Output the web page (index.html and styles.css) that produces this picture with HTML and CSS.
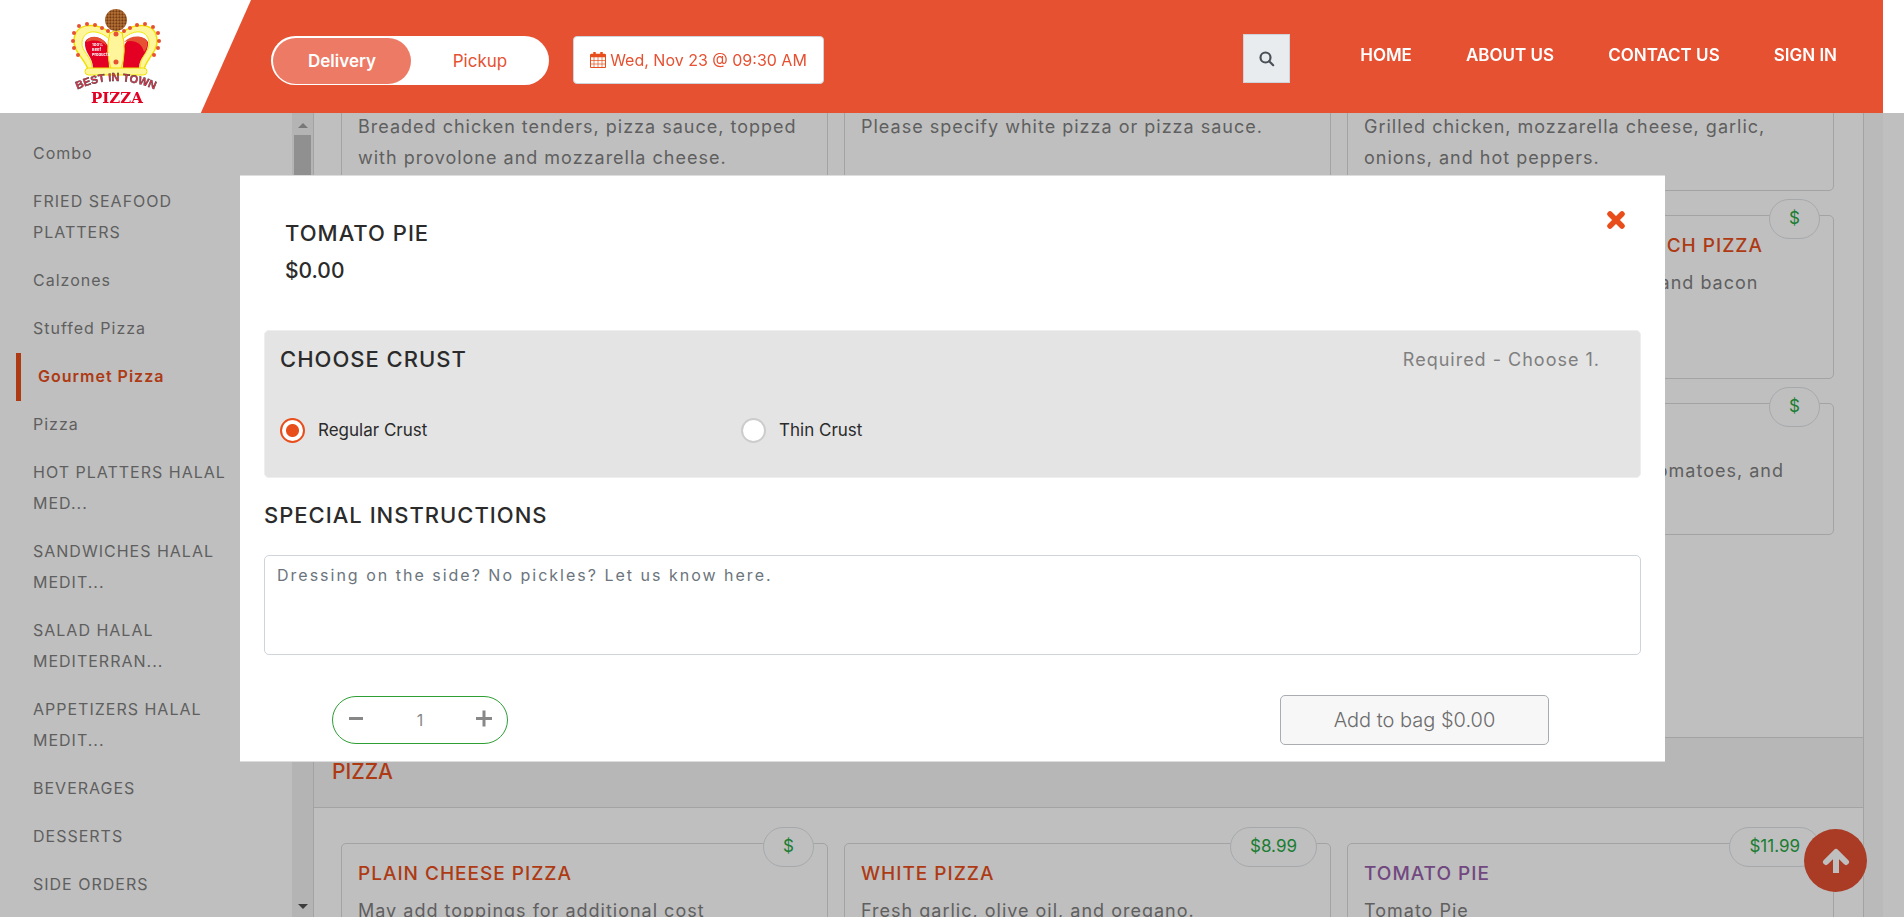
FILE: index.html
```html
<!DOCTYPE html>
<html lang="en">
<head>
<meta charset="utf-8">
<title>Best in Town Pizza</title>
<link rel="stylesheet" href="styles.css">
</head>
<body>
<header class="topbar">
  <div class="brand">
    <a class="logo" href="#" aria-label="Best in Town Pizza">
      <svg width="100" height="106" viewBox="0 0 100 106">
        <defs>
          <path id="arch" d="M8 91 Q49 71 92 91"/>
          <pattern id="meat" width="3" height="3" patternUnits="userSpaceOnUse"><rect width="3" height="3" fill="#9a5a24"/><circle cx="1" cy="1" r=".7" fill="#c98a4a"/><circle cx="2.300" cy="2.300" r=".7" fill="#6c3414"/></pattern>
        </defs>
        <path d="M22 70 C20 60 7 52 8 40 C9 22 32 22 44 33 L56 33 C68 22 90 22 91 40 C92 52 79 60 78 70 Z" fill="#fff59a" stroke="#f0e000" stroke-width="1.500"/>
        <path d="M26 68 C26 56 15 52 16 42 C18 28 34 30 43 39 L44 68 Z" fill="#fff" stroke="#f0e800"/>
        <path d="M74 68 C74 56 84 52 83 42 C81 28 66 30 57 39 L56 68 Z" fill="#fff" stroke="#f0e800"/>
        <path d="M27 68 C27 57 18 53 19 42 C23 34 37 36 42 46 L43 68 Z" fill="#e30022"/>
        <path d="M73 68 C73 57 83 53 82 42 C77 34 62 36 58 46 L57 68 Z" fill="#e30022"/>
        <path d="M20 42 C24 33 37 36 41 46 C34 39 26 40 20 42Z" fill="#e65132"/>
        <path d="M58 42 C66 34 78 36 81 41 C82 46 80 50 78 52 C76 43 68 39 58 42Z" fill="#e65132"/>
        <path d="M44 33 Q50 29 56 33 Q61 50 55 69 L45 69 Q39 50 44 33Z" fill="#fff59a" stroke="#f0d800"/>
        <rect x="19" y="68" width="62" height="7" rx="3.500" fill="#fff59a" stroke="#f0e000"/>
        <circle cx="50" cy="20" r="11" fill="url(#meat)"/>
        <g fill="#e65132"><circle cx="13" cy="26" r="2"/><circle cx="21" cy="24" r="2"/><circle cx="29" cy="25" r="2"/><circle cx="36" cy="28" r="2"/><circle cx="42" cy="31" r="2"/><circle cx="50" cy="34" r="2.500"/><circle cx="58" cy="31" r="2"/><circle cx="64" cy="28" r="2"/><circle cx="71" cy="25" r="2"/><circle cx="79" cy="24" r="2"/><circle cx="87" cy="27" r="2"/><circle cx="92" cy="33" r="2"/><circle cx="93" cy="41" r="2"/><circle cx="92" cy="48" r="2"/><circle cx="88" cy="55" r="2"/><circle cx="8" cy="33" r="2"/><circle cx="7" cy="41" r="2"/><circle cx="8" cy="48" r="2"/><circle cx="12" cy="55" r="2"/><circle cx="50" cy="62" r="2.500"/></g>
        <g class="logo-note"><text x="26" y="46">100%</text><text x="26" y="51">Beef</text><text x="26" y="56">Products</text></g>
        <text class="logo-arch"><textPath href="#arch" startOffset="50%" text-anchor="middle">BEST IN TOWN</textPath></text>
        <text class="logo-name" x="51" y="103" text-anchor="middle">PIZZA</text>
      </svg>
    </a>
  </div>
  <div class="mode" role="group" aria-label="Order type">
    <button class="mode-btn is-on" type="button">Delivery</button>
    <button class="mode-btn" type="button">Pickup</button>
  </div>
  <button class="when" type="button">
    <svg width="16" height="16" viewBox="0 0 16 16" fill="none" stroke="#e84e1b"><path d="M.500 2.500h15v13h-15z"/><path d="M0 4h16M1 3h14" stroke-width="2.500"/><path d="M4.500 0v4M11.500 0v4" stroke-width="2.500"/><path d="M4 5v10M8 5v10M12 5v10M1 8.500h14M1 12h14" stroke-width=".7"/></svg>
    Wed, Nov 23 @ 09:30 AM
  </button>
  <button class="search" type="button" aria-label="Search">
    <svg width="16" height="16" viewBox="0 0 16 16" fill="none" stroke="#495057" stroke-width="2.200"><circle cx="6.500" cy="6.500" r="5"/><path d="M10.200 10.200l4 4" stroke-linecap="round"/></svg>
  </button>
  <nav class="nav">
    <a href="#">HOME</a><a href="#">ABOUT US</a><a href="#">CONTACT US</a><a href="#">SIGN IN</a>
  </nav>
</header>

<div class="page">
  <aside class="side">
    <nav class="cats">
      <a href="#">Combo</a>
      <a href="#">FRIED SEAFOOD PLATTERS</a>
      <a href="#">Calzones</a>
      <a href="#">Stuffed Pizza</a>
      <a class="current" href="#">Gourmet Pizza</a>
      <a href="#">Pizza</a>
      <a href="#">HOT PLATTERS HALAL MED...</a>
      <a href="#">SANDWICHES HALAL MEDIT...</a>
      <a href="#">SALAD HALAL<br>MEDITERRAN...</a>
      <a href="#">APPETIZERS HALAL MEDIT...</a>
      <a href="#">BEVERAGES</a>
      <a href="#">DESSERTS</a>
      <a href="#">SIDE ORDERS</a>
    </nav>
    <div class="track" aria-hidden="true"><i class="up"></i><i class="thumb"></i><i class="down"></i></div>
  </aside>
  <main class="menu">
    <section class="group group-first">
      <article class="card"><h3>CHICKEN TENDER</h3><p>Breaded chicken tenders, pizza sauce, topped with provolone and mozzarella cheese.</p></article>
      <article class="card"><h3>BROCCOLI PIZZA</h3><p>Please specify white pizza or pizza sauce.</p></article>
      <article class="card"><h3>GRILLED CHICKEN</h3><p>Grilled chicken, mozzarella cheese, garlic, onions, and hot peppers.</p></article>
      <article class="card card-last card-tall"><span class="price">$</span><h3>CRISPY CHICKEN BACON RANCH PIZZA</h3><p>Ranch, grilled chicken, cheese and bacon</p></article>
      <article class="card card-last"><span class="price">$</span><h3>VEGGIE</h3><p>Peppers, onions, mushrooms, tomatoes, and olives</p></article>
    </section>
    <h2 class="group-title">PIZZA</h2>
    <section class="group group-next">
      <article class="card"><span class="price">$</span><h3>PLAIN CHEESE PIZZA</h3><p>May add toppings for additional cost</p></article>
      <article class="card"><span class="price">$8.99</span><h3>WHITE PIZZA</h3><p>Fresh garlic, olive oil, and oregano.</p></article>
      <article class="card"><span class="price">$11.99</span><h3 class="seen">TOMATO PIE</h3><p>Tomato Pie</p></article>
    </section>
  </main>
</div>

<button class="to-top" type="button" aria-label="Back to top">
  <svg width="28" height="28" viewBox="0 0 28 28" fill="none" stroke="#fff" stroke-width="6"><path d="M14 26V5"/><path d="M4 15L14 5l10 10" stroke-linecap="round" stroke-linejoin="round"/></svg>
</button>

<div class="backdrop">
  <form class="dialog" role="dialog" aria-labelledby="item-name">
    <div class="item">
      <div><h2 id="item-name">TOMATO PIE</h2><p class="item-price">$0.00</p></div>
      <button class="close" type="button" aria-label="Close">
        <svg width="18" height="18" viewBox="0 0 18 18" stroke="#e84e1b" stroke-width="5.500"><path d="M3 3l12 12M15 3L3 15" stroke-linecap="round"/></svg>
      </button>
    </div>
    <section class="crust">
      <div class="crust-head"><h2>CHOOSE CRUST</h2><span>Required - Choose 1.</span></div>
      <div class="options">
        <label><input type="radio" name="crust" checked>Regular Crust</label>
        <label><input type="radio" name="crust">Thin Crust</label>
      </div>
    </section>
    <label class="note-label" for="note">SPECIAL INSTRUCTIONS</label>
    <textarea class="note" id="note" placeholder="Dressing on the side? No pickles? Let us know here."></textarea>
    <div class="actions">
      <div class="qty">
        <button type="button" aria-label="Less"><svg width="18" height="20" viewBox="0 0 18 20" stroke="#888" stroke-width="3"><path d="M2 8.500h14"/></svg></button>
        <input type="text" value="1" aria-label="Quantity">
        <button type="button" aria-label="More"><svg width="18" height="20" viewBox="0 0 18 20" stroke="#888" stroke-width="3"><path d="M1 8.500h16M9 .500v16"/></svg></button>
      </div>
      <button class="add" type="submit">Add to bag $0.00</button>
    </div>
  </form>
</div>
</body>
</html>
```
FILE: styles.css
```css
* { box-sizing: border-box; }
body {
  margin: 0;
  height: 100vh;
  overflow: hidden;
  background: #fff;
  color: #7f7f7f;
  font: 400 18px/31px Inter, "Open Sans", sans-serif;
}
h2, h3, p { margin: 0; font-weight: 500; }
a { color: inherit; text-decoration: none; }
button, input, textarea { font: inherit; color: inherit; }
button { padding: 0; cursor: pointer; }
svg { display: block; flex: none; }

.topbar {
  position: fixed;
  inset: 0 21px auto 0;
  z-index: 3;
  height: 113px;
  display: flex;
  align-items: flex-start;
  background: #e65132;
  box-shadow: 21px 0 0 #fff;
}
.brand {
  width: 251px;
  height: 113px;
  padding: 0 66px;
  background: #fff;
  clip-path: polygon(0 0, 100% 0, 80% 100%, 0 100%);
}
.logo { display: block; }
.logo-note { font: 700 4px Inter, sans-serif; fill: #fff; }
.logo-arch { font: 700 11px "Liberation Sans", sans-serif; fill: #e8304a; stroke: #333; stroke-width: 0.4px; }
.logo-name { font: 700 15px "DejaVu Serif", serif; fill: #e30022; }

.mode {
  display: flex;
  width: 278px;
  height: 49px;
  margin: 36px 24px 0 20px;
  padding: 2px 0 1px 2px;
  border-radius: 25px;
  background: #fff;
  font-size: 17px;
}
.mode-btn { flex: 1; border: 0; border-radius: 23px; background: none; color: #e65132; }
.mode-btn.is-on { background: #ec7a64; color: #fff; font-weight: 600; }
.when {
  display: flex;
  align-items: center;
  justify-content: center;
  gap: 4px;
  width: 251px;
  height: 48px;
  margin-top: 36px;
  border: 1px solid #ced4da;
  border-radius: 4px;
  background: #fff;
  color: #e65132;
  font-size: 16px;
}
.search {
  display: grid;
  place-items: center;
  width: 47px;
  height: 49px;
  margin: 34px 70px 0 auto;
  border: 1px solid #ced4da;
  background: #e9ecef;
}
.nav { display: flex; gap: 54px; padding: 40px 46px 0 0; color: #fff; font-size: 17px; font-weight: 600; }

.page { display: flex; height: 100vh; margin-right: 21px; padding-right: 19px; background: #f8f8f8; }
.side { display: flex; width: 313px; flex: none; padding-top: 113px; background: #fff; }
.cats { flex: 1; padding: 17px 56px 0 16px; font-size: 16px; letter-spacing: 1px; }
.cats a { display: block; padding: 8px 0 9px 17px; }
.cats .current { border-left: 5px solid #e84e1b; color: #e84e1b; font-weight: 600; }
.track { display: flex; flex-direction: column; align-items: center; width: 21px; padding: 10px 2px 8px; background: #f1f1f1; }
.up, .down { border: 5px solid transparent; }
.up { border-top: 0; border-bottom-color: #a0a0a0; }
.down { border-bottom: 0; border-top-color: #505050; margin-top: auto; }
.thumb { width: 17px; height: 200px; margin-top: 7px; background: #c1c1c1; }

.menu { flex: 1; overflow: hidden; border: solid #dadada; border-width: 0 1px; background: #fff; }
.group { display: grid; grid-template-columns: repeat(3, 1fr); gap: 24px 16px; padding: 0 29px 0 27px; }
.group-first { padding-top: 59px; padding-bottom: 202px; }
.group-next { padding-top: 35px; }
.group-title {
  padding: 18px 18px 20px;
  border: solid #dadada;
  border-width: 1px 0;
  background: #f5f5f5;
  color: #e84e1b;
  font-size: 21px;
}
.card { position: relative; min-height: 132px; padding: 14px 16px 16px; border: 1px solid #dadada; border-radius: 5px; letter-spacing: 1px; }
.card-tall { min-height: 164px; }
.card-last { grid-column: 3; }
.card h3 { margin-bottom: 6px; color: #e84e1b; font-size: 19px; }
.card .seen { color: #9760ab; }
.card p { font-weight: 400; }
.price {
  position: absolute;
  top: -17px;
  right: 13px;
  padding: 3px 19px 4px;
  border: 1px solid #dee2e6;
  border-radius: 20px;
  background: #fff;
  color: #28a745;
  font-size: 17px;
  letter-spacing: 0;
}
.to-top {
  position: fixed;
  right: 37px;
  bottom: 25px;
  display: grid;
  place-items: center;
  width: 63px;
  height: 63px;
  border: 0;
  border-radius: 50%;
  background: #e34f32;
}

.backdrop { position: fixed; inset: 0; z-index: 2; padding: 175px 239px 0 240px; background: rgba(0, 0, 0, 0.25); }
.dialog { padding: 38px 24px 16px; border: solid #ddd; border-width: 1px 0; background: #fff; color: #2b2b2b; }
.dialog h2, .note-label { font-size: 22px; font-weight: 500; letter-spacing: 1px; }
.item { display: flex; justify-content: space-between; padding: 4px 16px 44px 21px; }
.item-price { margin-top: 6px; font-size: 21px; }
.close { align-self: flex-start; border: 0; background: none; margin-top: -7px; }
.crust { min-height: 148px; padding: 13px 15px; border: 1px solid #eee; border-radius: 5px; background: #e4e4e4; }
.crust-head { display: flex; justify-content: space-between; align-items: center; padding-right: 25px; }
.crust-head span { color: #7f7f7f; letter-spacing: 1px; }
.options { display: grid; grid-template-columns: repeat(3, 461px); margin-top: 40px; font-size: 17px; }
.options label { display: flex; align-items: center; gap: 13px; }
.options input {
  appearance: none;
  width: 25px;
  height: 25px;
  margin: 0;
  border: 2px solid #ccc;
  border-radius: 50%;
  background: #fff;
}
.options input:checked { border-color: #e84e1b; background: radial-gradient(circle, #e84e1b 6px, #fff 7px); }
.note-label { display: block; margin: 22px 0 24px; }
.note {
  display: block;
  width: 100%;
  height: 100px;
  padding: 4px 12px;
  border: 1px solid #ced4da;
  border-radius: 5px;
  resize: none;
  font-size: 16px;
  letter-spacing: 2px;
}
.note::placeholder { color: #6c757d; }
.actions { display: flex; justify-content: space-between; align-items: center; padding: 40px 92px 0 68px; }
.qty { display: flex; align-items: center; width: 176px; height: 48px; padding: 0 14px; border: 1px solid #2e9e35; border-radius: 24px; color: #888; }
.qty button { border: 0; background: none; }
.qty input { flex: 1; min-width: 0; padding: 0; border: 0; text-align: center; background: none; font-size: 16px; }
.add { width: 269px; height: 50px; border: 1px solid #a9adb1; border-radius: 5px; background: #f7f7f7; color: #6c6c6c; font-size: 20px; font-weight: 300; }
```
